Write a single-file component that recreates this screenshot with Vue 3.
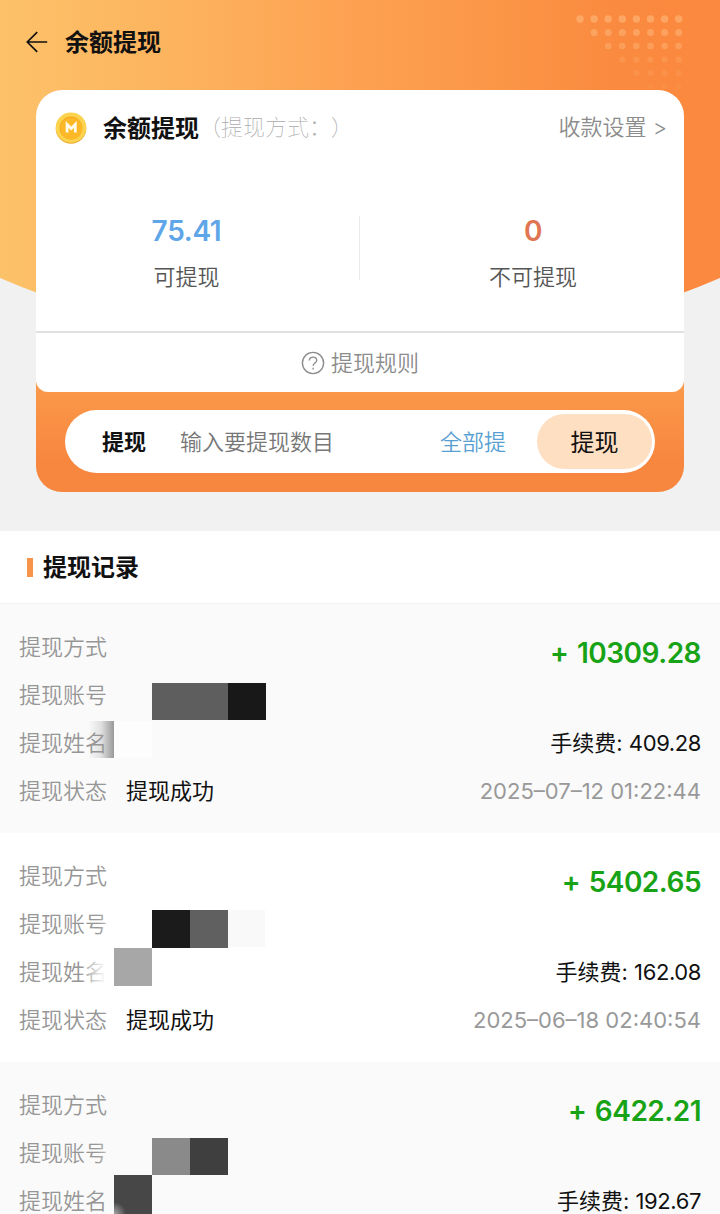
<template>
  <div class="page">
    <!-- Orange header area with the balance card -->
    <div class="hero">
      <div class="hero-bg"></div>
      <svg class="hero-dots" width="120" height="80" viewBox="0 0 120 80">
        <circle
          v-for="dot in dots"
          :key="dot.key"
          :cx="dot.x"
          :cy="dot.y"
          :r="dot.r"
          :opacity="dot.opacity"
          fill="#ffbd84"
        />
      </svg>

      <header class="nav">
        <svg class="nav-back" width="22" height="22" viewBox="0 0 22 22">
          <path d="M11.2 1.2 1.3 11l9.9 9.8M1.6 11h19.6" />
        </svg>
        <h1 class="nav-title">余额提现</h1>
      </header>

      <section class="card">
        <div class="card-main">
          <div class="card-head">
            <svg class="coin" width="32" height="32" viewBox="0 0 32 32">
              <circle cx="16" cy="16.4" r="15.3" fill="#eaa92f" />
              <circle cx="16" cy="15.6" r="15.2" fill="#fcd34f" />
              <circle cx="16" cy="16" r="11.4" fill="#f4a91f" />
              <circle cx="16.3" cy="16.5" r="10.8" fill="#fdb827" />
              <path class="coin-mark" d="M12.1 20.4v-8l4.1 4.2 4.1-4.2v8" />
            </svg>
            <h2 class="card-title">余额提现</h2>
            <span class="card-method">（提现方式：）</span>
            <a class="card-setting">收款设置 <span class="gt">&gt;</span></a>
          </div>

          <div class="stats">
            <div class="stat">
              <strong class="stat-num blue">75.41</strong>
              <span class="stat-label">可提现</span>
            </div>
            <div class="stat">
              <strong class="stat-num red">0</strong>
              <span class="stat-label">不可提现</span>
            </div>
          </div>

          <div class="rules">
            <svg class="rules-icon" width="24" height="24" viewBox="0 0 24 24">
              <circle cx="12" cy="12" r="10.6" />
              <path d="M8.3 9.6c0-2.1 1.6-3.5 3.7-3.5s3.7 1.4 3.7 3.3c0 2.6-3.6 2.7-3.6 5.4" />
              <path d="M12.1 16.8v1.6" />
            </svg>
            <span class="rules-text">提现规则</span>
          </div>
        </div>

        <div class="withdraw">
          <span class="withdraw-label">提现</span>
          <span class="withdraw-input">输入要提现数目</span>
          <a class="withdraw-all">全部提</a>
          <button class="withdraw-btn">提现</button>
        </div>
      </section>
    </div>

    <!-- History -->
    <h2 class="section-title"><span class="section-text">提现记录</span></h2>
    <ul class="records">
      <li v-for="item in records" :key="item.amount" class="record">
        <div class="record-left">
          <p>提现方式</p>
          <p>提现账号</p>
          <p>提现姓名</p>
          <p v-if="item.status">提现状态<span class="status">{{ item.status }}</span></p>
        </div>
        <div class="record-right">
          <p class="amount">+ {{ item.amount }}</p>
          <p class="fee">手续费: <span class="fee-num">{{ item.fee }}</span></p>
          <p v-if="item.time" class="time">{{ item.time }}</p>
        </div>
        <!-- Masked account and name -->
        <span
          v-for="(m, i) in item.masks"
          :key="i"
          class="mask"
          :style="{ left: m.x + 'px', top: m.y + 'px', width: m.w + 'px', height: m.h + 'px', background: m.bg }"
        ></span>
      </li>
    </ul>
  </div>
</template>

<script setup>
// Dotted triangle in the top right corner, fading downwards
const dots = []
for (let row = 0; row < 6; row++) {
  for (let col = row; col < 8; col++) {
    dots.push({
      key: row + '-' + col,
      x: 10 + col * 14.1,
      y: 9 + row * 13.5,
      r: 3.7 - row * 0.2,
      opacity: [0.55, 0.48, 0.38, 0.22, 0.18, 0.1][row]
    })
  }
}

const records = [
  {
    amount: '10309.28',
    fee: '409.28',
    status: '提现成功',
    time: '2025–07–12 01:22:44',
    masks: [
      { x: 88, y: 117, w: 26, h: 37, bg: 'linear-gradient(90deg, rgba(150,150,150,0), rgba(150,150,150,.25) 50%, #999)' },
      { x: 114, y: 117, w: 38, h: 37, bg: '#fdfdfd' },
      { x: 152, y: 79, w: 76, h: 37, bg: '#5e5e5e' },
      { x: 227.5, y: 79, w: 38, h: 37, bg: '#181818' }
    ]
  },
  {
    amount: '5402.65',
    fee: '162.08',
    status: '提现成功',
    time: '2025–06–18 02:40:54',
    masks: [
      { x: 80, y: 114, w: 34, h: 40, bg: 'linear-gradient(90deg, rgba(255,255,255,0), rgba(255,255,255,.9) 70%)' },
      { x: 98, y: 77, w: 16, h: 37, bg: 'linear-gradient(90deg, rgba(255,255,255,0), rgba(255,255,255,.7))' },
      { x: 152, y: 77, w: 38, h: 38, bg: '#1b1b1b' },
      { x: 189.5, y: 77, w: 38, h: 38, bg: '#606060' },
      { x: 228, y: 77, w: 37, h: 37, bg: '#f9f9f9' },
      { x: 114, y: 115, w: 38, h: 38, bg: '#a7a7a7' }
    ]
  },
  {
    amount: '6422.21',
    fee: '192.67',
    masks: [
      { x: 96, y: 76, w: 18, h: 37, bg: 'linear-gradient(90deg, rgba(250,250,250,0), rgba(250,250,250,.6))' },
      { x: 152, y: 76, w: 38, h: 37, bg: '#8a8a8a' },
      { x: 189.5, y: 76, w: 38, h: 37, bg: '#3f3f3f' },
      { x: 114, y: 113, w: 38, h: 39, bg: 'radial-gradient(circle at 0 100%, #a5a5a5, #474747 12px)' }
    ]
  }
]
</script>

<style>
body {
  margin: 0;
}
</style>

<style scoped>
.page {
  width: 720px;
  height: 1214px;
  overflow: hidden;
  background: #fff;
  font-family: Inter, "Noto Sans CJK SC", sans-serif;
  font-size: 22px;
  line-height: 32px;
  color: #111;
}

h1,
h2,
p,
ul {
  margin: 0;
  padding: 0;
}

.hero {
  position: relative;
  box-sizing: border-box;
  height: 531px;
  overflow: hidden;
  background: #f1f1f1;
}

/* Wider than the screen, so only the flat part of the curve shows */
.hero-bg {
  position: absolute;
  top: 0;
  left: -144px;
  width: 1008px;
  height: 344px;
  border-radius: 0 0 504px 504px / 0 0 220px 220px;
  background: linear-gradient(90deg, #fcc269 144px, #fdb25d 330px, #fda151 500px, #fb9647 640px, #fa8a3f 760px, #fb893f 864px);
}

.hero-dots {
  position: absolute;
  top: 10px;
  left: 570px;
}

.nav {
  position: relative;
  display: flex;
  align-items: center;
  height: 84px;
  padding-left: 26px;
}

.nav-back {
  fill: none;
  stroke: #111;
  stroke-width: 1.7;
}

.nav-title {
  margin-left: 17px;
  padding-top: 2px;
  font-size: 24px;
  font-weight: 700;
}

.card {
  position: relative;
  margin: 6px 36px 0;
  height: 402px;
  border-radius: 26px;
  background: linear-gradient(180deg, #fb9a4b 290px, #f7863e 375px);
}

.card-main {
  height: 302px;
  border-radius: 26px 26px 12px 12px;
  background: #fff;
}

.card-head {
  display: flex;
  align-items: center;
  height: 75px;
  padding: 0 17px 0 19px;
}

.coin-mark {
  fill: none;
  stroke: #fffbe8;
  stroke-width: 2.8;
}

.card-title {
  margin-left: 16px;
  padding-top: 2px;
  font-size: 24px;
  font-weight: 700;
}

.card-method {
  padding-bottom: 2px;
  color: #aaa;
  font-weight: 100;
  text-spacing-trim: space-all;
}

.card-setting {
  margin-left: auto;
  padding-bottom: 1px;
  color: #8c8c8c;
  font-weight: 350;
}

.gt {
  font-size: 22px;
}

.stats {
  display: flex;
  height: 166px;
}

.stat {
  position: relative;
  display: flex;
  flex: 1;
  flex-direction: column;
  align-items: center;
  padding-top: 44px;
}

.stat:first-child {
  flex: 0 0 301px;
  margin-right: 45px;
}

.stat:first-child::after {
  content: "";
  position: absolute;
  top: 51px;
  right: -23px;
  width: 1px;
  height: 64px;
  background: #ebebeb;
}

.stat-num {
  height: 44px;
  font-size: 28px;
  line-height: 44px;
  font-weight: 600;
  letter-spacing: -0.3px;
}

.stat-label {
  height: 48px;
  line-height: 48px;
  color: #555;
  font-weight: 350;
}

.blue {
  color: #5ea6e8;
}

.red {
  color: #df7552;
}

.rules {
  display: flex;
  align-items: center;
  justify-content: center;
  gap: 6px;
  box-sizing: border-box;
  height: 61px;
  border-top: 2px solid #e1e1e1;
  color: #8c8c8c;
  font-weight: 350;
}

.rules-icon {
  fill: none;
  stroke: #8c8c8c;
  stroke-width: 1.4;
}

.withdraw {
  display: flex;
  align-items: center;
  box-sizing: border-box;
  height: 63px;
  margin: 18px 29px 0;
  padding: 3px 3px 3px 37px;
  border-radius: 32px;
  background: #fff;
}

.withdraw-label {
  font-weight: 700;
}

.withdraw-input {
  margin-left: 34px;
  color: #777;
  font-weight: 350;
}

.withdraw-all {
  margin-left: auto;
  color: #589fd2;
  font-weight: 350;
}

.withdraw-btn {
  width: 115px;
  height: 55px;
  margin-left: 31px;
  padding: 2px 0 0;
  border: 0;
  border-radius: 28px;
  background: #ffdfc2;
  color: #111;
  font-family: inherit;
  font-size: 24px;
  line-height: 53px;
}

.section-title {
  display: flex;
  align-items: center;
  gap: 10px;
  height: 72px;
  padding-left: 27px;
  border-bottom: 1px solid #f3f3f3;
  font-size: 24px;
  font-weight: 700;
}

.section-title::before {
  content: "";
  width: 6px;
  height: 19px;
  background: #f79449;
}

.section-text {
  padding-top: 2px;
}

.records {
  list-style: none;
}

.record {
  position: relative;
  display: flex;
  justify-content: space-between;
  box-sizing: border-box;
  height: 229px;
  padding: 19px 19px 0;
  line-height: 48px;
}

.record:nth-child(odd) {
  background: #fafafa;
}

.record-left {
  color: #969696;
  font-weight: 350;
}

.status {
  margin-left: 19px;
  color: #111;
  font-weight: 400;
}

.record-right {
  text-align: right;
}

.amount {
  height: 90px;
  padding-top: 6px;
  color: #18a316;
  font-size: 28px;
  font-weight: 600;
  letter-spacing: -0.5px;
  word-spacing: 2px;
}

.fee-num {
  letter-spacing: -0.4px;
}

.time {
  color: #999;
  font-weight: 370;
}

.mask {
  position: absolute;
}
</style>
